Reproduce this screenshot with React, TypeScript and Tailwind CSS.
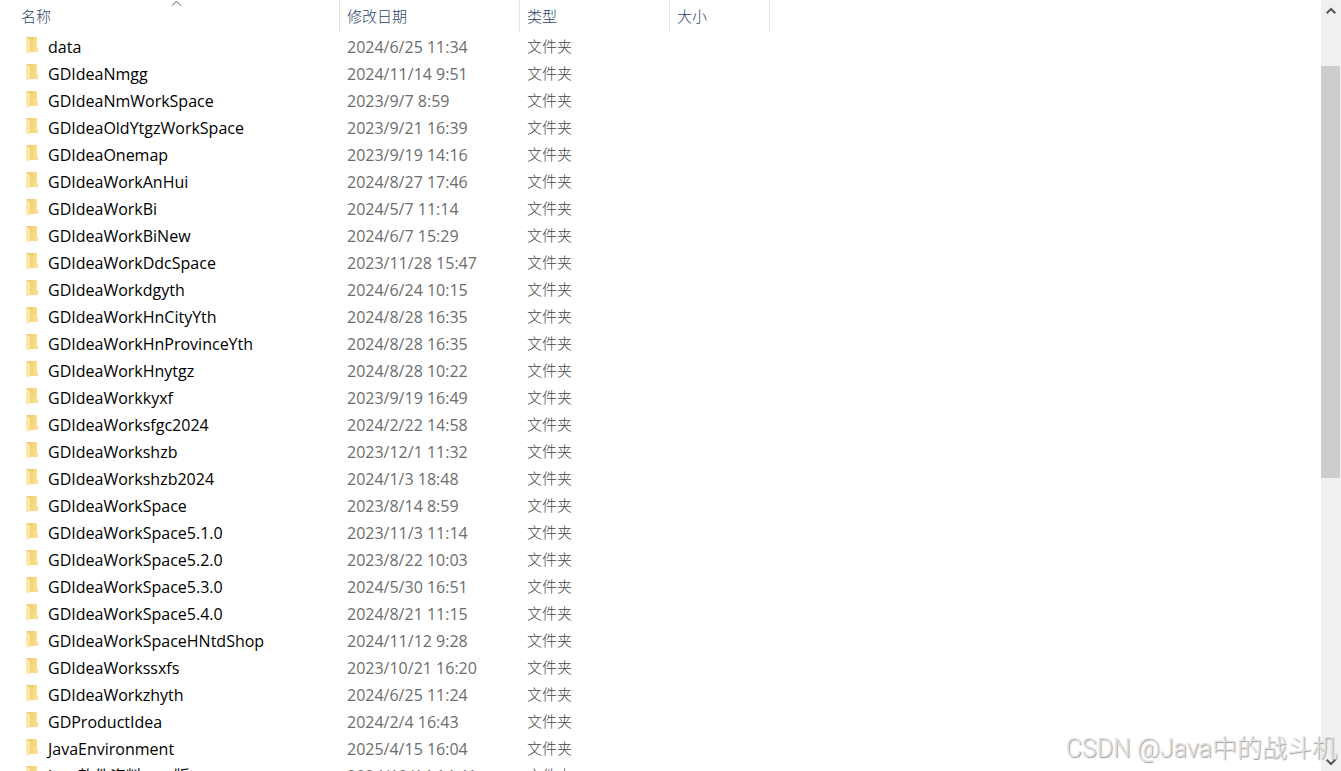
import React from "react";

type Entry = { name: string; modified: string };

const entries: Entry[] = [
  { name: "data", modified: "2024/6/25 11:34" },
  { name: "GDIdeaNmgg", modified: "2024/11/14 9:51" },
  { name: "GDIdeaNmWorkSpace", modified: "2023/9/7 8:59" },
  { name: "GDIdeaOldYtgzWorkSpace", modified: "2023/9/21 16:39" },
  { name: "GDIdeaOnemap", modified: "2023/9/19 14:16" },
  { name: "GDIdeaWorkAnHui", modified: "2024/8/27 17:46" },
  { name: "GDIdeaWorkBi", modified: "2024/5/7 11:14" },
  { name: "GDIdeaWorkBiNew", modified: "2024/6/7 15:29" },
  { name: "GDIdeaWorkDdcSpace", modified: "2023/11/28 15:47" },
  { name: "GDIdeaWorkdgyth", modified: "2024/6/24 10:15" },
  { name: "GDIdeaWorkHnCityYth", modified: "2024/8/28 16:35" },
  { name: "GDIdeaWorkHnProvinceYth", modified: "2024/8/28 16:35" },
  { name: "GDIdeaWorkHnytgz", modified: "2024/8/28 10:22" },
  { name: "GDIdeaWorkkyxf", modified: "2023/9/19 16:49" },
  { name: "GDIdeaWorksfgc2024", modified: "2024/2/22 14:58" },
  { name: "GDIdeaWorkshzb", modified: "2023/12/1 11:32" },
  { name: "GDIdeaWorkshzb2024", modified: "2024/1/3 18:48" },
  { name: "GDIdeaWorkSpace", modified: "2023/8/14 8:59" },
  { name: "GDIdeaWorkSpace5.1.0", modified: "2023/11/3 11:14" },
  { name: "GDIdeaWorkSpace5.2.0", modified: "2023/8/22 10:03" },
  { name: "GDIdeaWorkSpace5.3.0", modified: "2024/5/30 16:51" },
  { name: "GDIdeaWorkSpace5.4.0", modified: "2024/8/21 11:15" },
  { name: "GDIdeaWorkSpaceHNtdShop", modified: "2024/11/12 9:28" },
  { name: "GDIdeaWorkssxfs", modified: "2023/10/21 16:20" },
  { name: "GDIdeaWorkzhyth", modified: "2024/6/25 11:24" },
  { name: "GDProductIdea", modified: "2024/2/4 16:43" },
  { name: "JavaEnvironment", modified: "2025/4/15 16:04" },
  { name: "Java软件资料mac版", modified: "2024/12/14 14:41" },
];

function FolderIcon() {
  return (
    <svg className="block h-[18px] w-3 shrink-0" viewBox="0 0 12 18" aria-hidden="true">
      <defs>
        <linearGradient id="folder-back" x1="0" y1="0" x2="1" y2="0.3">
          <stop offset="0.3" stopColor="#efcd72" />
          <stop offset="1" stopColor="#fcdf8e" />
        </linearGradient>
      </defs>
      <path d="M0 0H11V11H12V15H0Z" fill="url(#folder-back)" />
      <path d="M0 0L4 3V14L3 17L0 15Z" fill="#ffe8a6" />
    </svg>
  );
}

function HeaderCell({ label, sorted = false }: { label: string; sorted?: boolean }) {
  return (
    <th
      scope="col"
      aria-sort={sorted ? "ascending" : undefined}
      className="relative h-8 border-r border-[#e5e5e5] p-0 text-left font-light"
    >
      <button
        type="button"
        className={`block h-8 w-full text-left text-[#2c4468] ${sorted ? "pl-[21px]" : "pl-[7px]"}`}
      >
        {label}
      </button>
      {sorted && (
        <svg
          className="absolute top-0 left-[171px] h-[7px] w-[11px]"
          viewBox="0 0 11 7"
          fill="none"
          stroke="#5a5a5a"
          aria-hidden="true"
        >
          <path d="M1 5.700L5.500 1.200L10 5.700" />
        </svg>
      )}
    </th>
  );
}

function FileList() {
  return (
    <table className="w-[770px] table-fixed border-separate border-spacing-0">
      <colgroup>
        <col className="w-[340px]" />
        <col className="w-[180px]" />
        <col className="w-[150px]" />
        <col className="w-[100px]" />
      </colgroup>
      <thead>
        <tr>
          <HeaderCell label="名称" sorted />
          <HeaderCell label="修改日期" />
          <HeaderCell label="类型" />
          <HeaderCell label="大小" />
        </tr>
      </thead>
      <tbody className="text-[#6d6d6d]">
        {entries.map((entry) => (
          <tr key={entry.name} className="h-[27px]">
            <td className="p-0 pl-[26px] text-base leading-[22px]">
              <div className="flex items-center gap-[10px] text-black">
                <FolderIcon />
                <span className="pt-0.5">{entry.name}</span>
              </div>
            </td>
            <td className="p-0 pt-0.5 pl-[7px] text-base leading-[22px]">{entry.modified}</td>
            <td className="p-0 pl-[7px] font-light text-[#454545]">文件夹</td>
            <td className="p-0" />
          </tr>
        ))}
      </tbody>
    </table>
  );
}

function ScrollBar() {
  return (
    <div className="flex w-5 shrink-0 flex-col bg-[#f0f0f0]">
      <button type="button" aria-label="向上滚动" className="flex h-[22px] shrink-0 items-center justify-center">
        <svg className="h-2 w-[10px]" viewBox="0 0 10 8" fill="none" stroke="#555" strokeWidth="2" aria-hidden="true">
          <path d="M0.700 6.300L5 2L9.300 6.300" />
        </svg>
      </button>
      <div className="flex flex-1 flex-col pt-11 pr-px">
        <div className="h-[412px] bg-[#cdcdcd]" />
      </div>
      <button type="button" aria-label="向下滚动" className="flex h-[18px] shrink-0 items-center justify-center">
        <svg className="h-2 w-[10px]" viewBox="0 0 10 8" fill="none" stroke="#555" strokeWidth="2" aria-hidden="true">
          <path d="M0.700 1.700L5 6L9.300 1.700" />
        </svg>
      </button>
    </div>
  );
}

export default function App() {
  return (
    <div className="relative flex h-screen overflow-hidden bg-white font-['Open_Sans','Noto_Sans_CJK_SC',sans-serif] text-[15px] leading-[22px]">
      <main className="min-w-0 flex-1 overflow-hidden">
        <FileList />
      </main>
      <ScrollBar />
      <p className="pointer-events-none absolute right-1 bottom-1 font-['Roboto','Noto_Sans_CJK_SC',sans-serif] text-[25px] leading-9 font-light whitespace-nowrap text-[#e2e2e2] [text-shadow:1px_1px_1px_#999]">
        CSDN @Java中的战斗机
      </p>
    </div>
  );
}
